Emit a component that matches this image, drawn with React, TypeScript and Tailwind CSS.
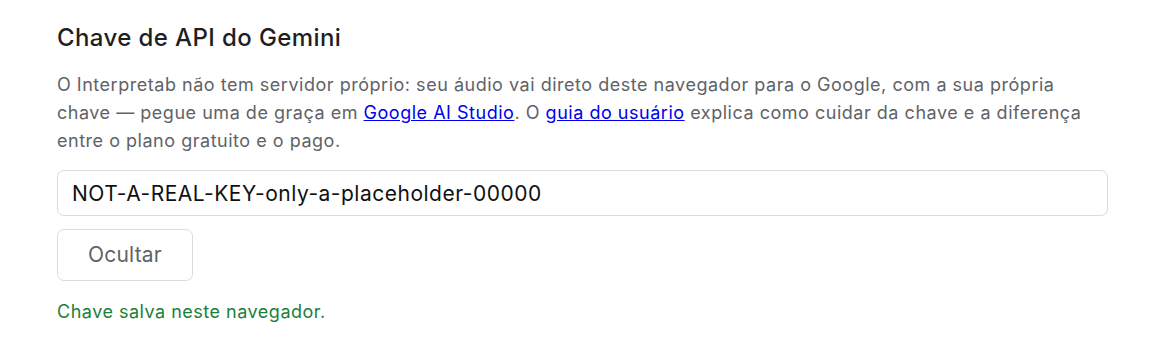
import React, { useState } from 'react';

const App: React.FC = () => {
  const [apiKey, setApiKey] = useState('NOT-A-REAL-KEY-only-a-placeholder-00000');
  const [hidden, setHidden] = useState(false);

  return (
    <div className="min-h-[347px] bg-white px-[57px] pt-[24px] font-['Inter',sans-serif]">
      <h2 className="text-[24px] leading-[28px] font-medium tracking-[0.4px] text-[#1f1f1f]">Chave de API do Gemini</h2>
      <p className="mt-[19px] text-[18px] leading-[28px] tracking-[0.52px] text-[#5f6368]">
        O Interpretab não tem servidor próprio: seu áudio vai direto deste navegador para o Google, com a sua própria
        chave — pegue uma de graça em{' '}
        <a href="#" className="text-[#0000ee] underline">Google AI Studio</a>. O{' '}
        <a href="#" className="text-[#0000ee] underline">guia do usuário</a> explica como cuidar da chave e a diferença
        entre o plano gratuito e o pago.
      </p>
      <input
        type={hidden ? 'password' : 'text'}
        value={apiKey}
        onChange={(e) => setApiKey(e.target.value)}
        className="mt-[15px] block w-full h-[46px] rounded-[7px] border border-[#dcdcdc] px-[14px] text-[21px] tracking-[0.5px] text-[#111] outline-none"
      />
      <button
        type="button"
        onClick={() => setHidden((h) => !h)}
        className="mt-[13px] block w-[136px] h-[52px] rounded-[7px] border border-[#dcdcdc] bg-white text-[21px] tracking-[0.2px] text-[#5f6368]"
      >
        {hidden ? 'Mostrar' : 'Ocultar'}
      </button>
      <p className="mt-[17px] text-[18px] leading-[28px] tracking-[0.5px] text-[#1a7f37]">Chave salva neste navegador.</p>
    </div>
  );
};

export default App;
